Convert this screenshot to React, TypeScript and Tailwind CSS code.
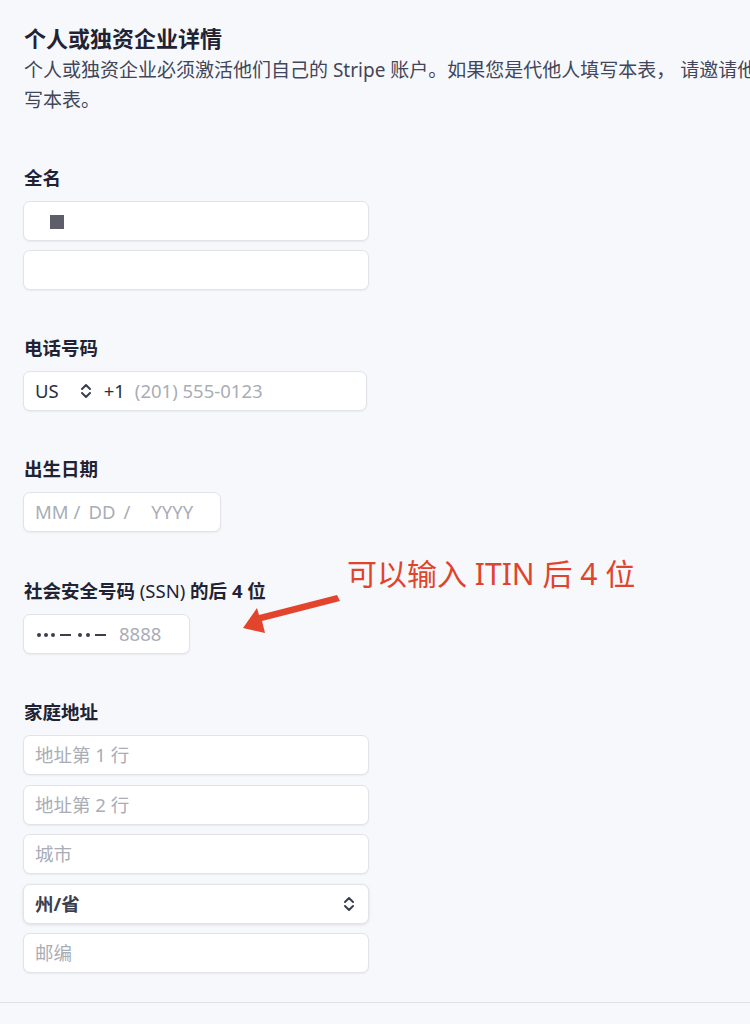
import React from "react";

const font = {
  fontFamily: '"Noto Sans", "Noto Sans CJK SC", sans-serif',
};

function Chevrons({ className = "" }: { className?: string }) {
  return (
    <svg width="12" height="16" viewBox="0 0 12 16" className={className} fill="none" stroke="currentColor" strokeWidth="2" strokeLinecap="round" strokeLinejoin="round">
      <path d="M2 6 L6 2 L10 6" />
      <path d="M2 10 L6 14 L10 10" />
    </svg>
  );
}

function Label({ children }: { children: React.ReactNode }) {
  return (
    <div className="text-[18.5px] leading-[26px] font-bold text-[#1f2333] mb-[10px] pl-px">{children}</div>
  );
}

const boxCls =
  "h-[40px] bg-white border border-[#e1e3e8] rounded-[7px] shadow-[0_1px_2px_rgba(20,30,60,0.06)] flex items-center px-[11px] text-[18.5px]";

function Input({ placeholder, w = "w-[346px]" }: { placeholder?: string; w?: string }) {
  return (
    <div className={`${boxCls} ${w}`}>
      <span className="text-[#a9adb5]">{placeholder}</span>
    </div>
  );
}

function Dot() {
  return <div className="w-[4px] h-[4px] rounded-full bg-[#3a3f50]" />;
}

function Dash() {
  return <div className="w-[11px] h-[2px] bg-[#3a3f50]" />;
}

export default function App() {
  return (
    <div className="w-[750px] h-[1024px] overflow-hidden bg-[#f7f8fb] relative" style={font}>
      <div className="pl-[23px] pt-[23px]">
        <div className="text-[22px] leading-[30px] font-bold text-[#1f2333] pl-px">个人或独资企业详情</div>
        <div className="mt-[2px] text-[19px] leading-[30px] text-[#41465a] whitespace-nowrap pl-px">
          个人或独资企业必须激活他们自己的 Stripe 账户。如果您是代他人填写本表， 请邀请他们来填
          <br />
          写本表。
        </div>

        <div className="mt-[50px]">
          <Label>全名</Label>
          <div className={`${boxCls} w-[346px]`}>
            <div className="ml-[15px] mt-[2px] w-[14px] h-[14px] bg-[#5d5e69]" />
          </div>
          <div className="mt-[9px]">
            <Input />
          </div>
        </div>

        <div className="mt-[45px]">
          <Label>电话号码</Label>
          <div className={`${boxCls} w-[344px]`}>
            <span className="text-[#2a2f40]">US</span>
            <Chevrons className="ml-[21px] text-[#3a3f50]" />
            <span className="ml-[12px] text-[#2a2f40]">+1</span>
            <span className="ml-[10px] text-[#a9adb5]">(201) 555-0123</span>
          </div>
        </div>

        <div className="mt-[45px]">
          <Label>出生日期</Label>
          <div className={`${boxCls} w-[198px] text-[#a9adb5]`}>
            <span>MM</span>
            <span className="ml-[5px]">/</span>
            <span className="ml-[8px]">DD</span>
            <span className="ml-[8px]">/</span>
            <span className="ml-[21px]">YYYY</span>
          </div>
        </div>

        <div className="mt-[46px] relative">
          <Label>
            社会安全号码 <span className="font-normal">(SSN)</span> 的后 4 位
          </Label>
          <div className={`${boxCls} w-[167px] pl-[13px]`}>
            <div className="flex items-center gap-[3px] mt-[2px]">
              <Dot />
              <Dot />
              <Dot />
            </div>
            <div className="ml-[5px] mt-[2px]">
              <Dash />
            </div>
            <div className="ml-[7px] flex items-center gap-[4px] mt-[2px]">
              <Dot />
              <Dot />
            </div>
            <div className="ml-[5px] mt-[2px]">
              <Dash />
            </div>
            <span className="ml-[13px] text-[#a9adb5]">8888</span>
          </div>
          <div className="absolute left-[324px] top-[-24px] text-[30px] leading-[40px] text-[#e0442d] whitespace-nowrap">
            可以输入 ITIN 后 4 位
          </div>
          <svg className="absolute left-[187px] top-[3px]" width="160" height="60" viewBox="210 580 160 60">
            <polygon points="337,594 340,600 262,620 265,632 243,627 257,607 259,614" fill="#e2442c" />
          </svg>
        </div>

        <div className="mt-[45px]">
          <Label>家庭地址</Label>
          <div className="flex flex-col gap-[9.5px]">
            <Input placeholder="地址第 1 行" />
            <Input placeholder="地址第 2 行" />
            <Input placeholder="城市" />
            <div className={`${boxCls} w-[346px] justify-between border-[#dcdfe5] shadow-[0_1px_3px_rgba(20,30,60,0.12)]`}>
              <span className="font-bold text-[#3a3f50]">州/省</span>
              <Chevrons className="mr-[2px] text-[#3a3f50]" />
            </div>
            <Input placeholder="邮编" />
          </div>
        </div>
      </div>
      <div className="absolute left-0 right-0 top-[1002px] h-px bg-[#dde1e8]" />
    </div>
  );
}
